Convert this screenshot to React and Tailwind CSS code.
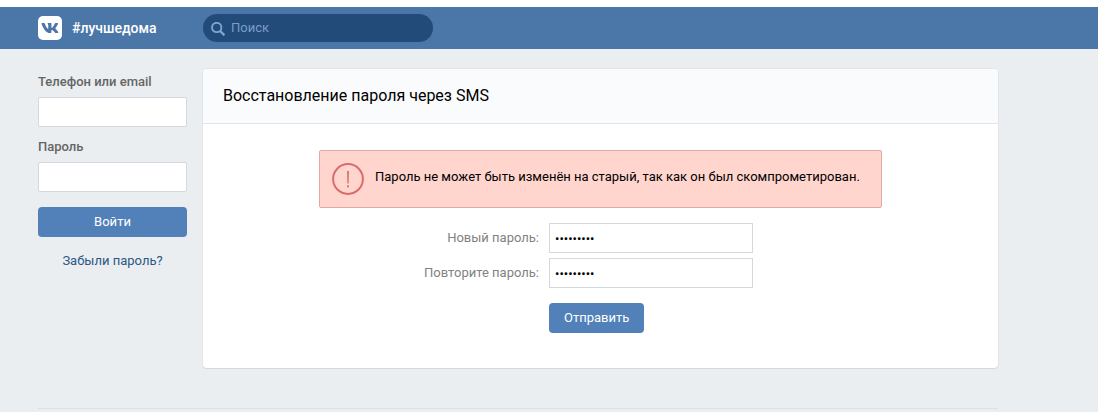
import { FaVk } from "react-icons/fa";

function SearchIcon() {
  return (
    <svg viewBox="0 0 14 14" className="mt-0.5 size-3.5 shrink-0" fill="none" stroke="#83a6d1" aria-hidden="true">
      <circle cx="5.7" cy="5.5" r="4.7" strokeWidth="1.8" />
      <path d="M9 8.9L13.4 13.3" strokeWidth="2.2" />
    </svg>
  );
}

function AlertIcon() {
  return (
    <svg viewBox="0 0 32 32" className="size-8 shrink-0" aria-hidden="true">
      <circle cx="16" cy="16" r="14.9" fill="none" stroke="#d96d6b" strokeWidth="2" />
      <path d="M15 8h2l-.3 12.5h-1.4z" fill="#d27a77" />
      <rect x="15" y="22.3" width="2" height="2" fill="#d27a77" />
    </svg>
  );
}

function Header() {
  return (
    <header className="border-t-[7px] border-white bg-[#4a76a8]">
      <div className="flex h-[42px] max-w-[1098px] items-center pr-[100px] pl-[38px]">
        <a href="#home" className="flex w-[165px] shrink-0 items-center gap-2.5 text-sm font-medium text-white">
          <span className="flex size-6 items-center justify-center rounded-[5px] bg-white text-[#4a76a8]">
            <FaVk className="size-[18px]" aria-hidden="true" />
          </span>
          #лучшедома
        </a>
        <label className="flex h-7 w-[230px] items-center gap-1.5 rounded-full bg-[#224b7a] px-2">
          <SearchIcon />
          <input
            type="search"
            aria-label="Поиск"
            placeholder="Поиск"
            className="min-w-0 flex-1 bg-transparent text-[13px] text-white outline-none placeholder:text-[#7b9dc8]"
          />
        </label>
      </div>
    </header>
  );
}

function LoginField({ id, label, type }) {
  return (
    <div className="flex flex-col gap-[7px]">
      <label htmlFor={id} className="leading-4 font-medium text-[#656565]">{label}</label>
      <input id={id} type={type} className="h-[30px] w-full rounded-[2px] border border-[#d3d9de] bg-white px-2 outline-none" />
    </div>
  );
}

function LoginForm() {
  return (
    <aside className="w-[149px] shrink-0 pt-[5px]">
      <form className="flex flex-col gap-4" onSubmit={(e) => e.preventDefault()}>
        <div className="flex flex-col gap-3">
          <LoginField id="login" label="Телефон или email" type="text" />
          <LoginField id="password" label="Пароль" type="password" />
        </div>
        <button className="-mt-px h-[30px] w-full rounded-[4px] bg-[#5181b8] text-white">Войти</button>
        <a href="#forgot" className="text-center leading-4 text-[#2a5885]">Забыли пароль?</a>
      </form>
    </aside>
  );
}

function PasswordRow({ id, label }) {
  return (
    <>
      <label htmlFor={id} className="text-right text-[#828282]">{label}</label>
      <input
        id={id}
        type="password"
        defaultValue="qwerty123"
        className="h-[30px] w-[204px] border border-[#d3d9de] bg-white px-[5px] text-black outline-none"
      />
    </>
  );
}

function RestoreCard() {
  return (
    <main className="min-w-0 flex-1 rounded-[4px] bg-white shadow-[0_1px_0_0_#d7d8db,0_0_0_1px_#e3e4e8]">
      <h1 className="rounded-t-[4px] border-b border-[#e4e6e9] bg-[#fafbfc] px-5 py-[15px] text-base text-black">
        Восстановление пароля через SMS
      </h1>
      <div className="flex flex-col items-center gap-[15px] pt-[26px] pb-[35px]">
        <div role="alert" className="flex w-[563px] gap-[11px] rounded-[2px] border border-[#e0a9a1] bg-[#ffd5cd] px-3 py-3 text-black">
          <AlertIcon />
          <p className="pt-1 leading-5">Пароль не может быть изменён на старый, так как он был скомпрометирован.</p>
        </div>
        <form className="w-[563px]" onSubmit={(e) => e.preventDefault()}>
          <div className="grid grid-cols-[220px_1fr] items-center gap-x-2.5 gap-y-[5px]">
            <PasswordRow id="new-password" label="Новый пароль:" />
            <PasswordRow id="repeat-password" label="Повторите пароль:" />
            <button className="col-start-2 mt-2.5 h-[30px] justify-self-start rounded-[4px] bg-[#5181b8] px-[15px] text-white">
              Отправить
            </button>
          </div>
        </form>
      </div>
    </main>
  );
}

export default function App() {
  return (
    <div className="min-h-screen bg-[#ebeef0] font-[Roboto,'Liberation_Sans',sans-serif] text-[13px]">
      <Header />
      <div className="max-w-[1098px] pr-[100px] pl-[38px]">
        <div className="flex items-start gap-4 pt-5 pb-10">
          <LoginForm />
          <RestoreCard />
        </div>
        <hr className="border-[#dcdfe3]" />
      </div>
    </div>
  );
}
